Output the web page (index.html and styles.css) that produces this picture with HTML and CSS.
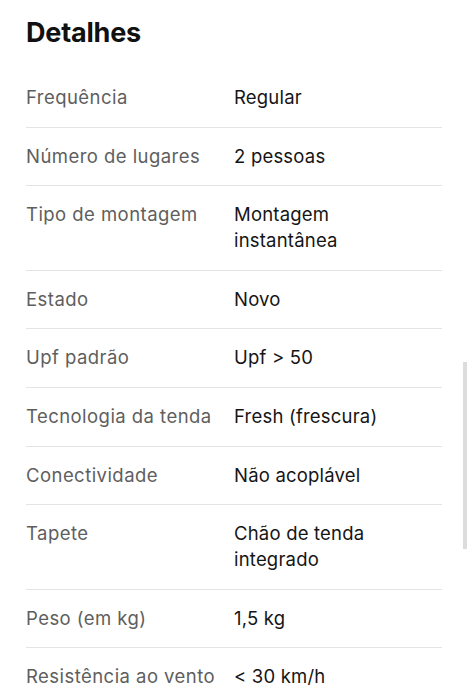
FILE: index.html
```html
<!DOCTYPE html>
<html lang="pt">
<head>
<meta charset="utf-8">
<link rel="stylesheet" href="styles.css">
</head>
<body>
<section class="details">
  <h2 class="title">Detalhes</h2>
  <dl class="list">
    <div class="row"><dt>Frequência</dt><dd>Regular</dd></div>
    <div class="row"><dt>Número de lugares</dt><dd>2 pessoas</dd></div>
    <div class="row"><dt>Tipo de montagem</dt><dd>Montagem instantânea</dd></div>
    <div class="row"><dt>Estado</dt><dd>Novo</dd></div>
    <div class="row"><dt>Upf padrão</dt><dd>Upf &gt; 50</dd></div>
    <div class="row"><dt>Tecnologia da tenda</dt><dd>Fresh (frescura)</dd></div>
    <div class="row"><dt>Conectividade</dt><dd>Não acoplável</dd></div>
    <div class="row"><dt>Tapete</dt><dd>Chão de tenda integrado</dd></div>
    <div class="row"><dt>Peso (em kg)</dt><dd>1,5 kg</dd></div>
    <div class="row"><dt>Resistência ao vento</dt><dd>&lt; 30 km/h</dd></div>
  </dl>
</section>
<div class="scroll-thumb"></div>
</body>
</html>
```

FILE: styles.css
```css
html, body {
  margin: 0;
  padding: 0;
  background: #ffffff;
  overflow: hidden;
}
body {
  font-family: Inter, "Noto Sans", sans-serif;
  color: #1f1f1f;
}
.details {
  padding: 15px 26px 0 26px;
}
.title {
  margin: 0 0 18px 0;
  font-size: 27px;
  line-height: 36px;
  font-weight: 700;
  color: #111111;
  letter-spacing: -0.2px;
}
.list {
  margin: 0;
}
.row {
  display: grid;
  grid-template-columns: 1fr 1fr;
  padding: 16px 0;
  border-bottom: 1px solid #e4e4e4;
  font-size: 18.5px;
  line-height: 25.67px;
}
.row dt {
  color: #5e5e5e;
  margin: 0;
  letter-spacing: 0.45px;
}
.row dd {
  color: #151515;
  margin: 0;
  padding-right: 30px;
  letter-spacing: 0.2px;
}
.scroll-thumb {
  position: fixed;
  right: 1px;
  top: 362px;
  width: 4px;
  height: 187px;
  background: #dcdcdc;
}
```
